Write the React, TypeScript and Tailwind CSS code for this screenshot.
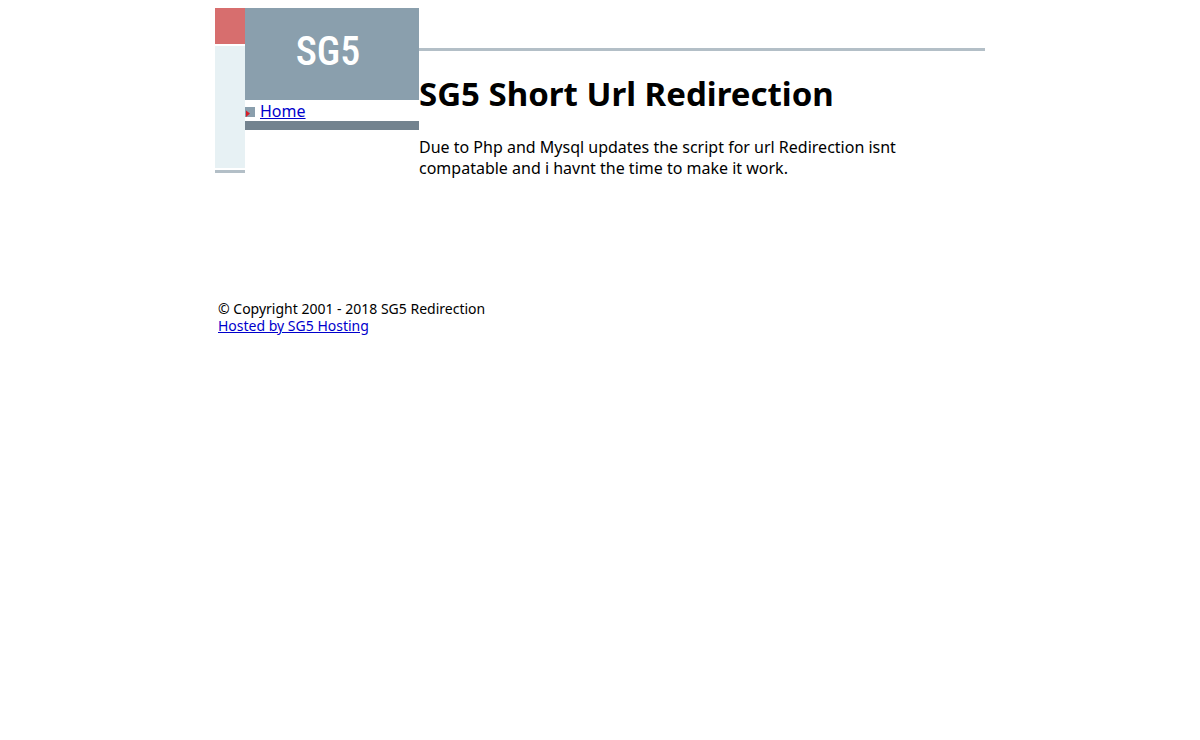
import React from 'react';

const Logo = () => (
  <div className="flex h-[92px] items-center justify-center bg-[#8a9fad] pr-2 pb-1">
    <span className="font-['Roboto_Condensed','Roboto',sans-serif] text-[40px] font-medium leading-none text-white">SG5</span>
  </div>
);

const Bullet = () => (
  <svg className="mt-[2px] h-[10px] w-[10px]" viewBox="0 0 10 10" aria-hidden="true">
    <rect width="10" height="10" fill="#8a9fad" />
    <path d="M1 3.5 5 6.5 1 10Z" fill="#d81e28" />
  </svg>
);

const SideStrip = () => (
  <div className="flex w-[30px] shrink-0 flex-col gap-[2px]">
    <div className="h-9 bg-[#d76e6e]" />
    <div className="h-[122px] bg-[#e7f1f4]" />
    <div className="h-[3px] bg-[#b3bfc7]" />
  </div>
);

const Menu = () => (
  <nav className="w-[174px] shrink-0">
    <Logo />
    <div className="flex h-[21px] items-center gap-[5px]">
      <Bullet />
      <a href="#" className="text-[16px] leading-[22px] text-[#0000cc] underline">Home</a>
    </div>
    <div className="h-[9px] bg-[#73838f]" />
  </nav>
);

const Footer = () => (
  <footer className="px-[3px] text-[14px] leading-[17px]">
    <p>© Copyright 2001 - 2018 SG5 Redirection</p>
    <a href="#" className="text-[#0000cc] underline">Hosted by SG5 Hosting</a>
  </footer>
);

const App = () => {
  return (
    <div className="min-h-screen bg-white px-2 pt-2 font-['Noto_Sans',sans-serif] text-black">
      <div className="mx-auto max-w-[770px]">
        <div className="flex min-h-[292px] items-start">
          <SideStrip />
          <Menu />
          <main className="min-w-0 flex-1 pt-10">
            <div className="h-[3px] bg-[#b3bfc7]" />
            <h1 className="mt-[22px] text-[33px] font-bold leading-[42px]">SG5 Short Url Redirection</h1>
            <p className="mt-[22px] max-w-[520px] text-[16px] leading-[21px]">
              Due to Php and Mysql updates the script for url Redirection isnt compatable and i havnt the time to make it work.
            </p>
          </main>
        </div>
        <Footer />
      </div>
    </div>
  );
};

export default App;
